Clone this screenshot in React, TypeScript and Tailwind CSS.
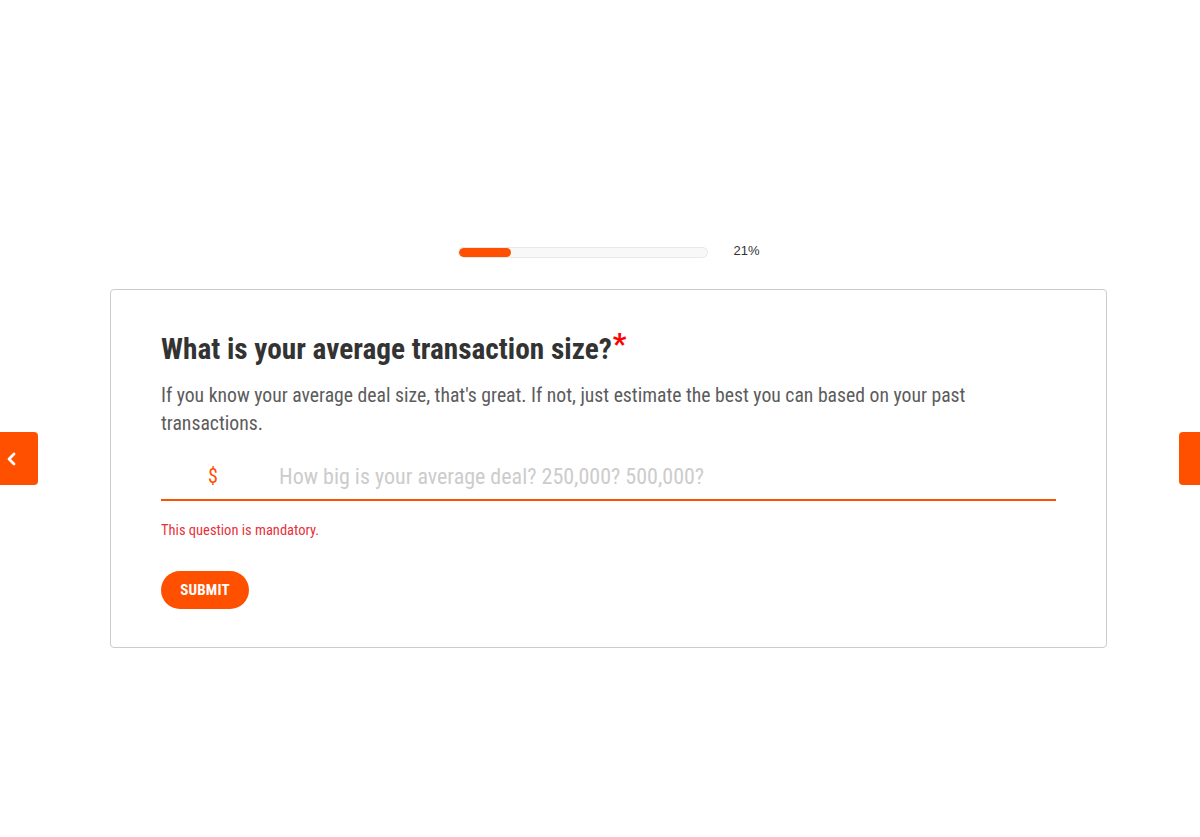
import React from 'react';

const condensed = { fontFamily: '"Roboto Condensed", Roboto, "Liberation Sans", sans-serif', fontStretch: 'condensed' } as React.CSSProperties;

export default function App() {
  return (
    <div className="relative w-full h-[837px] bg-white overflow-hidden">
      <button className="absolute left-0 top-[432px] w-[38px] h-[53px] bg-[#ff5000] rounded-r-[4px] flex items-center pl-[4px]">
        <svg width="14" height="16" viewBox="0 0 14 16" fill="none" stroke="white" strokeWidth="2.8" strokeLinecap="round" strokeLinejoin="round">
          <path d="M10 3l-5 5 5 5" />
        </svg>
      </button>
      <button className="absolute right-0 top-[432px] w-[21px] h-[53px] bg-[#ff5000] rounded-l-[4px]" />

      <div className="pt-[246px] flex flex-col items-center">
        <div className="flex items-center h-[12px] ml-[18px]">
          <div className="w-[250px] h-[11px] rounded-full border border-[#e8e8e8] bg-[#f8f8f8] overflow-hidden">
            <div className="h-full w-[52px] rounded-full bg-[#ff5000]" />
          </div>
          <span className="ml-[25px] text-[13px] leading-none text-[#333] font-['Liberation_Sans',sans-serif] relative top-[-2px]">21%</span>
        </div>

        <div className="mt-[31px] w-[997px] ml-[17px] border border-[#cccccc] rounded-[4px] px-[50px] pt-[40px] pb-[38px]" style={condensed}>
          <h1 className="text-[29.3px] font-bold text-[#333] leading-[38px]">
            What is your average transaction size?<span className="text-[#ff0000] text-[30px] relative top-[-5px] ml-[1px]">*</span>
          </h1>
          <p className="mt-[14px] text-[19.7px] leading-[28px] text-[#5c5c5c] pr-[60px]">
            If you know your average deal size, that's great. If not, just estimate the best you can based on your past transactions.
          </p>
          <div className="mt-[15px] flex items-center h-[48px] border-b-2 border-[#ff5000]">
            <span className="w-[118px] pl-[47px] text-[20px] text-[#ff5000]">$</span>
            <input
              className="flex-1 outline-none text-[22px] text-[#333] placeholder:text-[#cccccc] bg-transparent"
              style={condensed}
              placeholder="How big is your average deal? 250,000? 500,000?"
            />
          </div>
          <div className="mt-[20px] text-[14.5px] leading-[20px] text-[#e8303a]">This question is mandatory.</div>
          <button className="mt-[30px] h-[38px] w-[88px] rounded-full bg-[#ff5000] text-white text-[15px] font-bold tracking-[0.2px]" style={condensed}>
            SUBMIT
          </button>
        </div>
      </div>
    </div>
  );
}
